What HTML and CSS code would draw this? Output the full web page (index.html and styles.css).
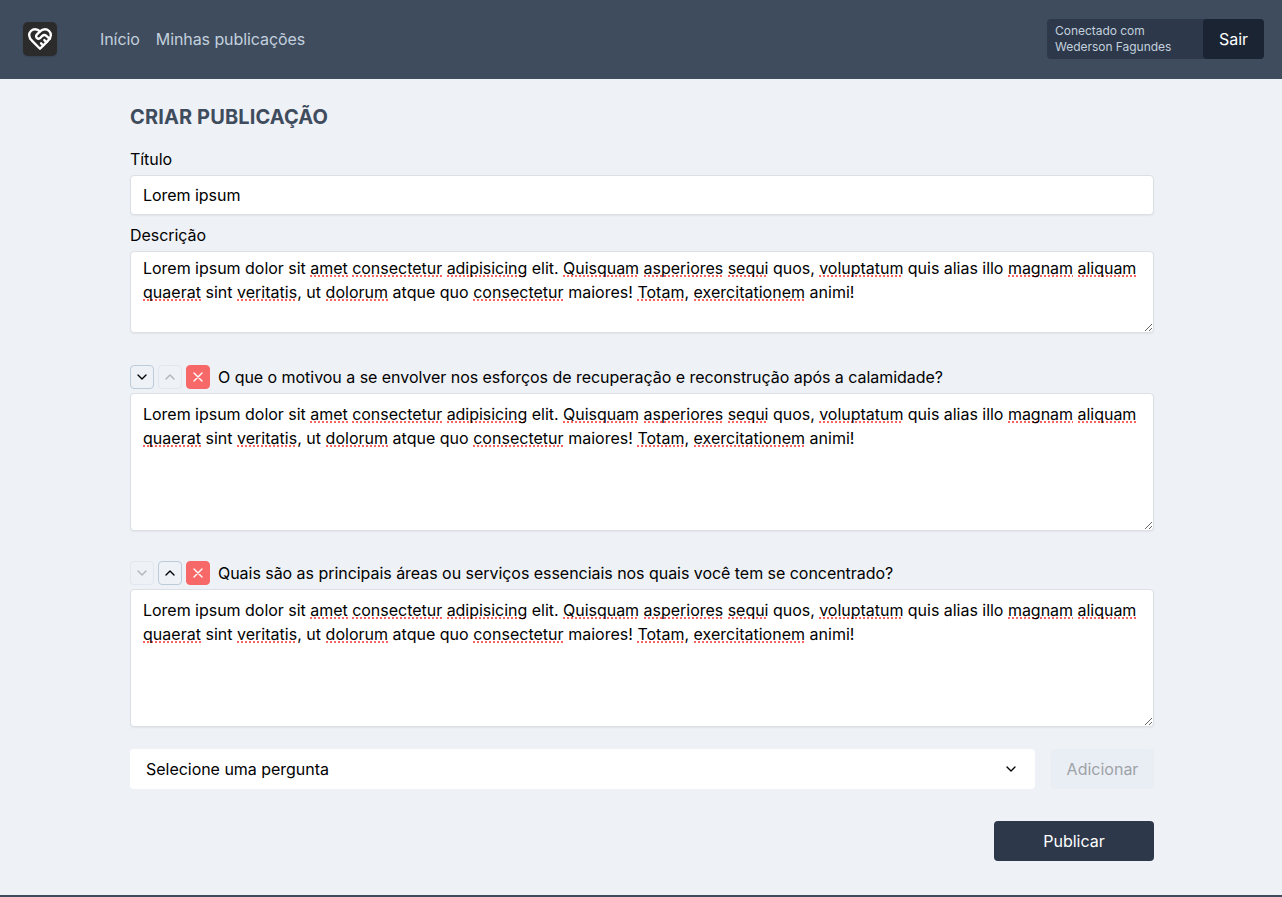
FILE: index.html
```html
<!DOCTYPE html>
<html lang="pt-BR">
<head>
<meta charset="utf-8">
<title>Criar publicação</title>
<link rel="stylesheet" href="styles.css">
</head>
<body>
<header class="header">
  <a class="logo">
    <svg viewBox="0 0 24 24" class="icon"><path d="M19 14c1.49-1.46 3-3.21 3-5.5A5.5 5.5 0 0 0 16.5 3c-1.76 0-3 .5-4.5 2-1.5-1.5-2.74-2-4.500-2A5.500 5.500 0 0 0 2 8.500c0 2.300 1.500 4.050 3 5.500l7 7Z"/><path d="M12 5 9.040 7.960a2.170 2.170 0 0 0 0 3.080c.820.820 2.130.850 3 .070l2.070-1.900a2.820 2.820 0 0 1 3.790 0l2.960 2.660"/><path d="m18 15-2-2"/><path d="m15 18-2-2"/></svg>
  </a>
  <nav class="nav"><a>Início</a><a>Minhas publicações</a></nav>
  <div class="session">
    <div class="user">Conectado com<br>Wederson Fagundes</div>
    <button class="logout">Sair</button>
  </div>
</header>
<main class="main">
  <h1 class="title">CRIAR PUBLICAÇÃO</h1>
  <div class="label">Título</div>
  <div class="field input">Lorem ipsum</div>
  <div class="label">Descrição</div>
  <div class="field area short"><span class="lead">Lorem ipsum dolor sit <u>amet</u> <u>consectetur</u> <u>adipisicing</u> elit. <u>Quisquam</u> <u>asperiores</u> <u>sequi</u> quos, <u>voluptatum</u> quis alias illo <u>magnam</u> <u>aliquam</u></span> <span class="rest"><u>quaerat</u> sint <u>veritatis</u>, ut <u>dolorum</u> atque quo <u>consectetur</u> maiores! <u>Totam</u>, <u>exercitationem</u> animi!</span></div>

  <section class="question">
    <div class="question-head">
      <button class="mini"><svg viewBox="0 0 24 24" class="icon"><path d="m6 9 6 6 6-6"/></svg></button>
      <button class="mini off"><svg viewBox="0 0 24 24" class="icon"><path d="m18 15-6-6-6 6"/></svg></button>
      <button class="mini remove"><svg viewBox="0 0 24 24" class="icon"><path d="M18 6 6 18M6 6l12 12"/></svg></button>
      <span class="question-text">O que o motivou a se envolver nos esforços de recuperação e reconstrução após a calamidade?</span>
    </div>
    <div class="field area tall"><span class="lead">Lorem ipsum dolor sit <u>amet</u> <u>consectetur</u> <u>adipisicing</u> elit. <u>Quisquam</u> <u>asperiores</u> <u>sequi</u> quos, <u>voluptatum</u> quis alias illo <u>magnam</u> <u>aliquam</u></span> <span class="rest"><u>quaerat</u> sint <u>veritatis</u>, ut <u>dolorum</u> atque quo <u>consectetur</u> maiores! <u>Totam</u>, <u>exercitationem</u> animi!</span></div>
  </section>

  <section class="question">
    <div class="question-head">
      <button class="mini off"><svg viewBox="0 0 24 24" class="icon"><path d="m6 9 6 6 6-6"/></svg></button>
      <button class="mini"><svg viewBox="0 0 24 24" class="icon"><path d="m18 15-6-6-6 6"/></svg></button>
      <button class="mini remove"><svg viewBox="0 0 24 24" class="icon"><path d="M18 6 6 18M6 6l12 12"/></svg></button>
      <span class="question-text">Quais são as principais áreas ou serviços essenciais nos quais você tem se concentrado?</span>
    </div>
    <div class="field area tall"><span class="lead">Lorem ipsum dolor sit <u>amet</u> <u>consectetur</u> <u>adipisicing</u> elit. <u>Quisquam</u> <u>asperiores</u> <u>sequi</u> quos, <u>voluptatum</u> quis alias illo <u>magnam</u> <u>aliquam</u></span> <span class="rest"><u>quaerat</u> sint <u>veritatis</u>, ut <u>dolorum</u> atque quo <u>consectetur</u> maiores! <u>Totam</u>, <u>exercitationem</u> animi!</span></div>
  </section>

  <div class="add-row">
    <div class="select"><span>Selecione uma pergunta</span><svg viewBox="0 0 24 24" class="icon"><path d="m6 9 6 6 6-6"/></svg></div>
    <button class="add">Adicionar</button>
  </div>
  <button class="publish">Publicar</button>
</main>
<footer class="footer"></footer>
</body>
</html>
```
FILE: styles.css
```css
* { box-sizing: border-box; }
body {
  margin: 0;
  height: 897px;
  display: flex;
  flex-direction: column;
  overflow: hidden;
  background: #eef1f6;
  color: #000;
  font: 16px/24px Inter, sans-serif;
}
button { font: inherit; border: 0; padding: 0; border-radius: 4px; }
.icon { display: block; fill: none; stroke: currentColor; stroke-width: 2; stroke-linecap: round; stroke-linejoin: round; }
.header {
  flex: none;
  height: 79px;
  padding: 0 18px 1px 23px;
  display: flex;
  align-items: center;
  background: #3f4c5d;
}
.logo {
  width: 34px;
  height: 34px;
  display: grid;
  place-items: center;
  border-radius: 5px;
  background: #2b2b2b;
  color: #fff;
  box-shadow: 0 1px 2px rgba(0, 0, 0, .15);
}
.logo .icon { width: 26px; height: 26px; stroke-width: 2.2; }
.nav { display: flex; gap: 16px; margin-left: 43px; color: #c3d0dd; letter-spacing: -.08px; }
.session { display: flex; width: 217px; height: 40px; margin-left: auto; border-radius: 4px; background: #2d384a; }
.user { flex: 1; padding: 4px 8px; font-size: 12px; line-height: 16px; letter-spacing: -.03px; color: #c3d0dd; }
.logout { width: 61px; background: #1b2433; color: #fff; }
.main { flex: 1; width: 1026px; margin: 0 auto; padding: 24px 0 0 2px; display: flex; flex-direction: column; }
.title { margin: 0 0 16px; font-size: 20px; line-height: 28px; font-weight: 700; letter-spacing: .12px; color: #3f4c5d; }
.label { margin: 0 0 4px; letter-spacing: -.06px; }
.field {
  border: 1px solid #dcdfe3;
  border-radius: 4px;
  background: #fff;
  box-shadow: 0 1px 2px rgba(0, 0, 0, .06);
}
.input { height: 40px; padding: 7px 12px; margin-bottom: 8px; letter-spacing: -.04px; }
.area { padding: 8px 12px; overflow: hidden; resize: vertical; }
.short { height: 82px; padding-top: 4px; margin-bottom: 32px; }
.tall { height: 138px; margin-bottom: 30px; }
.lead { letter-spacing: -.025px; }
.rest { letter-spacing: .015px; }
.area u {
  text-decoration: none;
  background: repeating-linear-gradient(90deg, #fb6262 0 2px, transparent 2px 4px) 0 calc(100% - 1px) / 100% 2px no-repeat;
}
.question-head { display: flex; gap: 4px; margin-bottom: 4px; }
.mini { width: 24px; height: 24px; display: grid; place-items: center; border: 1px solid #bccbda; background: #eef1f6; color: #000; }
.mini .icon { width: 16px; height: 16px; }
.mini.off { opacity: .25; }
.mini.remove { border-color: #f76969; background: #f76969; color: #fff; }
.question-text { margin-left: 4px; letter-spacing: -.04px; }
.add-row { display: flex; gap: 16px; margin-top: -8px; }
.select { flex: 1; height: 40px; padding: 0 16px; display: flex; align-items: center; justify-content: space-between; border-radius: 4px; background: #fff; letter-spacing: -.03px; }
.select .icon { width: 16px; height: 16px; }
.add { width: 103px; height: 40px; background: #e9eef5; color: #9fa2a7; }
.publish { width: 160px; height: 40px; margin-top: 32px; align-self: flex-end; background: #2d384a; color: #fff; }
.footer { flex: none; height: 2px; background: #3f4c5d; }
```
